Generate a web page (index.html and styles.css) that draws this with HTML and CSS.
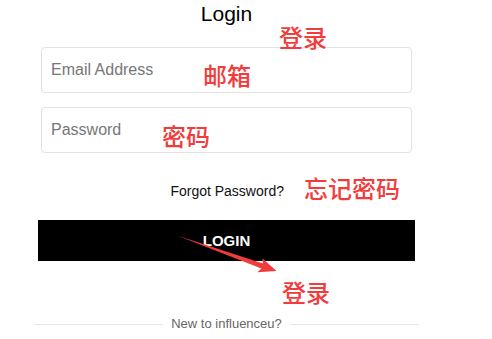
FILE: index.html
```html
<!DOCTYPE html>
<html lang="en">
<head>
	<meta charset="UTF-8">
	<title>Login</title>
	<link rel="stylesheet" href="styles.css">
</head>
<body>
	<div class="login-box">
		<h1 class="login-title">Login</h1>
		<form class="login-form">
			<input class="field" type="email" placeholder="Email Address">
			<input class="field field-pass" type="password" placeholder="Password">
			<div class="forgot"><a href="#">Forgot Password?</a></div>
			<button class="login-btn" type="button">LOGIN</button>
		</form>
		<div class="divider"><span>New to influenceu?</span></div>
	</div>

	<!-- red notes drawn over the screenshot -->
	<span class="note note-title">登录</span>
	<span class="note note-email">邮箱</span>
	<span class="note note-pass">密码</span>
	<span class="note note-forgot">忘记密码</span>
	<span class="note note-btn">登录</span>
	<svg class="arrow" width="492" height="339" viewBox="0 0 492 339">
		<polygon points="177,235.4 263,263.4 262.3,258.2 276.5,271 257.3,272.2 261.4,268.6" fill="#f23c3c"/>
	</svg>
</body>
</html>
```

FILE: styles.css
```css
* {
	box-sizing: border-box;
}

body {
	margin: 0;
	font-family: "Liberation Sans", Arial, sans-serif;
	background: #fff;
	color: #000;
}

.login-box {
	width: 377px;
	margin-left: 38px;
}

.login-title {
	margin: 0;
	padding-top: 2px;
	font-size: 21px;
	line-height: 24px;
	font-weight: normal;
	text-align: center;
}

.login-form {
	display: flex;
	flex-direction: column;
	margin-top: 21px;
}

.field {
	height: 46px;
	margin: 0 3px;
	padding: 0 9px;
	border: 1px solid #e2e2e2;
	border-radius: 4px;
	font-family: inherit;
	font-size: 16px;
	outline: none;
}

.field::placeholder {
	color: #777;
}

.field-pass {
	margin-top: 14px;
}

.forgot {
	margin-top: 30px;
	padding-right: 131px;
	text-align: right;
	font-size: 14px;
	line-height: 16px;
}

.forgot a {
	color: #111;
	text-decoration: none;
}

.login-btn {
	height: 41px;
	margin-top: 21px;
	border: none;
	background: #000;
	color: #fff;
	font-family: inherit;
	font-size: 15px;
	font-weight: bold;
}

.divider {
	display: flex;
	align-items: center;
	gap: 8px;
	margin: 55px -4px 0;
	font-size: 13px;
	line-height: 16px;
	color: #666;
}

.divider::before,
.divider::after {
	content: "";
	flex: 1;
	border-top: 1px solid #e6e6e6;
}

/* annotation layer */
.note {
	position: absolute;
	font-family: "Noto Sans CJK SC", sans-serif;
	font-size: 24px;
	font-weight: 500;
	line-height: 24px;
	color: #f23c3c;
}

.note-title { left: 279px; top: 25px; }
.note-email { left: 203px; top: 63px; }
.note-pass { left: 162px; top: 124px; }
.note-forgot { left: 304px; top: 176px; }
.note-btn { left: 282px; top: 280px; }

.arrow {
	position: absolute;
	left: 0;
	top: 0;
	pointer-events: none;
}
```
